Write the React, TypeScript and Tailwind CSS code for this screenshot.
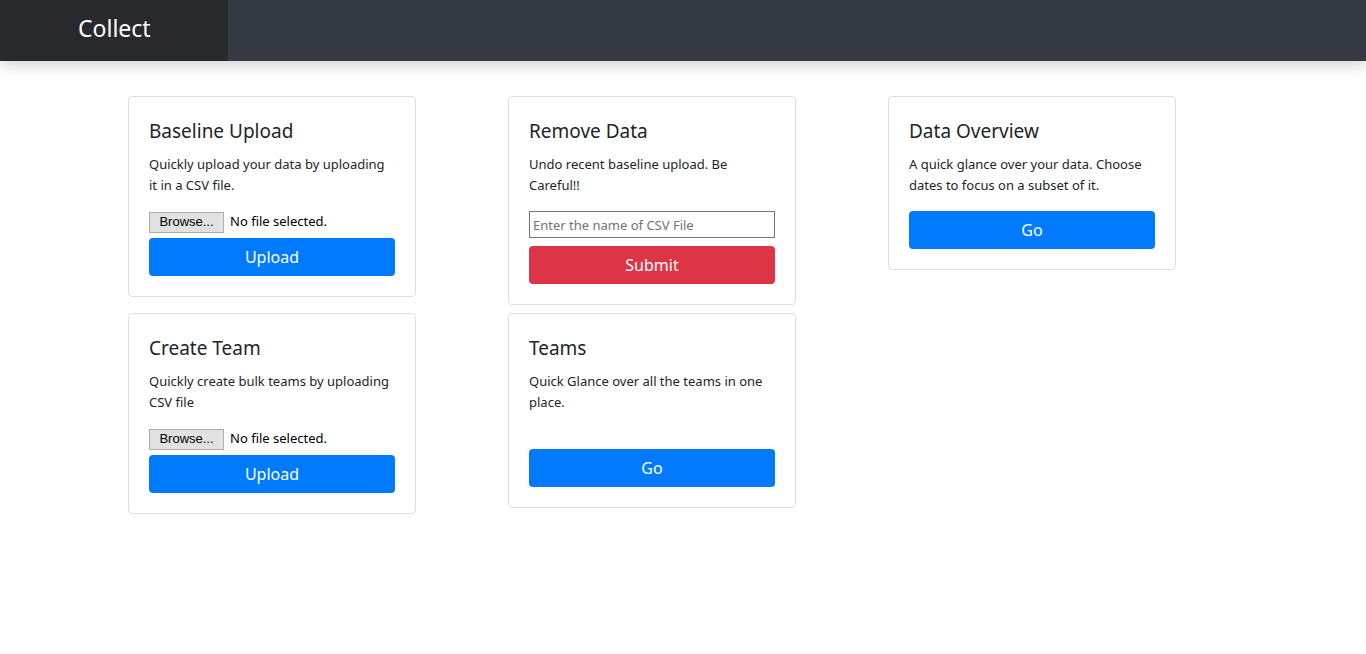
import React from 'react';

const font = { fontFamily: '"Noto Sans", "Open Sans", sans-serif' };

function FilePicker() {
  return (
    <div className="flex items-center h-[22px] mb-[5px]">
      <span className="h-[21px] w-[75px] flex items-center justify-center bg-[#e1e1e1] border border-[#adadad] text-[13px] text-black [font-family:'Liberation_Sans',sans-serif]">
        Browse...
      </span>
      <span className="ml-[6px] text-[13px] text-black">No file selected.</span>
    </div>
  );
}

function Card({ title, text, children }: { title: string; text: string; children: React.ReactNode }) {
  return (
    <div className="w-[288px] border border-[#dfdfdf] rounded-[4px] bg-white p-5">
      <h5 className="text-[19px] leading-[24px] pt-[2px] text-[#212529] mb-[11px]">{title}</h5>
      <p className="text-[13px] leading-[21px] text-[#212529] mb-[15px]">{text}</p>
      {children}
    </div>
  );
}

function Btn({ label, red }: { label: string; red?: boolean }) {
  return (
    <button
      className={
        'w-full h-[38px] rounded-[4px] text-white text-[16px] ' +
        (red ? 'bg-[#dc3545]' : 'bg-[#007bff]')
      }
    >
      {label}
    </button>
  );
}

export default function App() {
  return (
    <div className="min-h-[654px] bg-white" style={font}>
      <nav className="h-[61px] flex bg-[#353a42] shadow-[0_4px_14px_rgba(0,0,0,0.18)] relative">
        <div className="w-[228px] bg-[#27292d] flex items-center pl-[78px] pb-[5px] text-white text-[23px]">Collect</div>
      </nav>

      <div className="grid grid-cols-[288px_288px_288px] gap-x-[92px] gap-y-2 items-start pl-[128px] pt-[35px]">
        <Card title="Baseline Upload" text="Quickly upload your data by uploading it in a CSV file.">
          <FilePicker />
          <Btn label="Upload" />
        </Card>

        <Card title="Remove Data" text="Undo recent baseline upload. Be Careful!!">
          <input
            placeholder="Enter the name of CSV File"
            className="w-full h-[27px] border border-[#767676] px-[3px] text-[13px] mb-2 placeholder:text-[#757575] outline-none"
          />
          <Btn label="Submit" red />
        </Card>

        <Card title="Data Overview" text="A quick glance over your data. Choose dates to focus on a subset of it.">
          <Btn label="Go" />
        </Card>

        <Card title="Create Team" text="Quickly create bulk teams by uploading CSV file">
          <FilePicker />
          <Btn label="Upload" />
        </Card>

        <Card title="Teams" text="Quick Glance over all the teams in one place.">
          <div className="h-[21px]" />
          <Btn label="Go" />
        </Card>
      </div>
    </div>
  );
}
